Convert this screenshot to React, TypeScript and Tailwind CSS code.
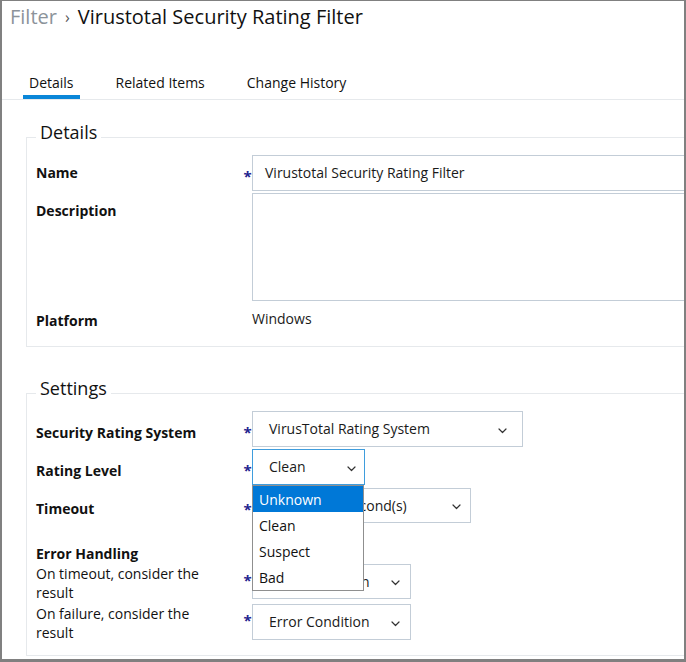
import type { ReactNode } from 'react';

function Chevron() {
  return (
    <svg width="9" height="6" viewBox="0 0 9 6" fill="none" className="mt-[3px] shrink-0">
      <path d="M1 1l3.5 3.5L8 1" stroke="#333" strokeWidth="1.2" strokeLinecap="round" strokeLinejoin="round" />
    </svg>
  );
}

function Star() {
  return (
    <span className="w-[9px] shrink-0 pt-[6px] text-center text-[15px] font-bold leading-[20px] text-[#24248f]">*</span>
  );
}

function Label({ children, className = '' }: { children: ReactNode; className?: string }) {
  return <div className={`w-[207px] shrink-0 font-bold text-[#111] ${className}`}>{children}</div>;
}

function Select({ value, className }: { value: string; className: string }) {
  return (
    <div className={`flex items-center justify-between border pl-[16px] ${className}`}>
      <span className="whitespace-nowrap">{value}</span>
      <Chevron />
    </div>
  );
}

export default function App() {
  const options = ['Unknown', 'Clean', 'Suspect', 'Bad'];

  return (
    <div className="h-[662px] w-[686px] overflow-hidden border-t border-r-2 border-b-[3px] border-l-2 border-[#808080] bg-white font-['Open_Sans',sans-serif] text-[14px] leading-[20px] text-[#1a1a1a]">
      <div className="flex items-center pt-[2px] pl-[8px] text-[20px] leading-[28px]">
        <span className="text-[#8c939a]">Filter</span>
        <span className="mx-[8px] text-[16px] text-[#555]">›</span>
        <span className="text-[#111]">Virustotal Security Rating Filter</span>
      </div>

      <div className="mt-[31px] flex gap-[30px] border-b border-[#e6e9ec] pl-[21px]">
        <div className="border-b-4 border-[#0a86d8] px-[6px] pt-[11px] pb-[2px] text-[#111]">Details</div>
        <div className="border-b-4 border-transparent px-[6px] pt-[11px] pb-[2px] text-[#111]">Related Items</div>
        <div className="border-b-4 border-transparent px-[6px] pt-[11px] pb-[2px] text-[#111]">Change History</div>
      </div>

      <fieldset className="mt-[20px] ml-[24px] w-[700px] border border-[#e6e9ec] px-[9px] pb-[15px]">
        <legend className="px-[4px] pb-[10px] text-[18px] leading-[24px] text-[#111]">Details</legend>
        <div className="mt-[1px] flex h-[36px] items-center">
          <Label>Name</Label>
          <Star />
          <div className="flex h-[36px] w-[460px] items-center border border-[#c3cdd7] pl-[12px]">
            Virustotal Security Rating Filter
          </div>
        </div>
        <div className="mt-[2px] flex">
          <Label className="pt-[8px]">Description</Label>
          <span className="w-[9px] shrink-0" />
          <div className="h-[108px] w-[460px] border border-[#c3cdd7]" />
        </div>
        <div className="mt-[8px] flex">
          <Label className="pt-[2px]">Platform</Label>
          <span className="w-[9px] shrink-0" />
          <div>Windows</div>
        </div>
      </fieldset>

      <fieldset className="mt-[29px] ml-[24px] w-[700px] border border-[#e6e9ec] px-[9px] pb-[13px]">
        <legend className="px-[4px] pb-[10px] text-[18px] leading-[24px] text-[#111]">Settings</legend>
        <div className="mt-[1px] flex h-[36px] items-center">
          <Label className="pt-[8px]">Security Rating System</Label>
          <Star />
          <Select value="VirusTotal Rating System" className="h-[36px] w-[271px] border-[#c3cdd7] pr-[15px]" />
        </div>
        <div className="mt-[2px] flex h-[36px] items-center">
          <Label className="pt-[8px]">Rating Level</Label>
          <Star />
          <div className="relative">
            <Select value="Clean" className="h-[36px] w-[113px] border-[#3f9ddd] pr-[8px]" />
            <div className="absolute top-full left-0 z-10 w-[112px] border border-[#8f8f8f] bg-white">
              {options.map((o, i) => (
                <div
                  key={o}
                  className={
                    i === 0
                      ? 'h-[26px] bg-[#0078d7] pl-[6px] leading-[28px] text-white'
                      : 'h-[26px] pl-[6px] leading-[28px] text-[#111]'
                  }
                >
                  {o}
                </div>
              ))}
            </div>
          </div>
        </div>
        <div className="mt-[3px] flex h-[35px] items-center">
          <Label className="pt-[6px]">Timeout</Label>
          <Star />
          <Select value="Wait for 30 Second(s)" className="h-[35px] w-[219px] border-[#c3cdd7] pr-[9px]" />
        </div>

        <div className="mt-[21px] leading-[19px] font-bold text-[#111]">Error Handling</div>
        <div className="mt-[1px] flex items-start">
          <div className="w-[207px] shrink-0 pr-[20px] leading-[19px] text-[#111]">On timeout, consider the result</div>
          <Star />
          <Select value="Error Condition" className="h-[35px] w-[159px] border-[#c3cdd7] pr-[10px]" />
        </div>
        <div className="mt-[2px] flex items-start">
          <div className="w-[207px] shrink-0 pr-[20px] leading-[19px] text-[#111]">On failure, consider the result</div>
          <Star />
          <Select value="Error Condition" className="h-[36px] w-[159px] border-[#c3cdd7] pr-[10px]" />
        </div>
      </fieldset>
    </div>
  );
}
